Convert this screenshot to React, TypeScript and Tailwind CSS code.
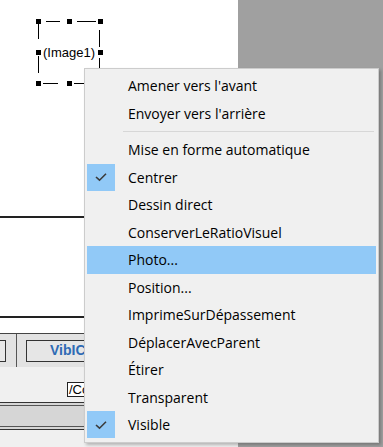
import React from "react";

type Item = { label: string; checked?: boolean; hover?: boolean } | "sep";

const items: Item[] = [
  { label: "Amener vers l'avant" },
  { label: "Envoyer vers l'arrière" },
  "sep",
  { label: "Mise en forme automatique" },
  { label: "Centrer", checked: true },
  { label: "Dessin direct" },
  { label: "ConserverLeRatioVisuel" },
  { label: "Photo...", hover: true },
  { label: "Position..." },
  { label: "ImprimeSurDépassement" },
  { label: "DéplacerAvecParent" },
  { label: "Étirer" },
  { label: "Transparent" },
  { label: "Visible", checked: true },
];

function Check() {
  return (
    <svg width="12" height="10" viewBox="0 0 12 10">
      <path d="M1 5 L4.5 8.2 L11 1.8" fill="none" stroke="#3b3b3b" strokeWidth="1.6" />
    </svg>
  );
}

function Selection() {
  const h = (x: number, y: number) => (
    <rect key={`${x}-${y}`} x={x - 2.5} y={y - 2.5} width="5" height="5" fill="#000" />
  );
  return (
    <svg width="238" height="100" className="block">
      <g stroke="#000" strokeWidth="1">
        <line x1="46" y1="21.5" x2="60" y2="21.5" />
        <line x1="77" y1="21.5" x2="96" y2="21.5" />
        <line x1="43" y1="83.5" x2="58" y2="83.5" />
        <line x1="74" y1="83.5" x2="90" y2="83.5" />
        <line x1="38.5" y1="24" x2="38.5" y2="39" />
        <line x1="38.5" y1="56" x2="38.5" y2="73" />
        <line x1="99.5" y1="30" x2="99.5" y2="47" />
        <line x1="99.5" y1="58" x2="99.5" y2="76" />
      </g>
      {h(38.5, 21.5)}
      {h(69.5, 21.5)}
      {h(100.5, 21.5)}
      {h(38.5, 52.5)}
      {h(100.5, 52.5)}
      {h(38.5, 83.5)}
      {h(69.5, 83.5)}
      <text x="43" y="57" fontSize="13" fontFamily="Liberation Sans, Arial, sans-serif" fill="#000">
        (Image1)
      </text>
    </svg>
  );
}

export default function App() {
  return (
    <div className="relative w-[383px] h-[447px] overflow-hidden bg-[#a0a0a0]">
      <div className="flex h-full">
        <div className="w-[238px] h-full bg-white flex flex-col">
          <div className="h-[216px]">
            <Selection />
          </div>
          <div className="h-[2px] bg-[#222]" />
          <div className="h-[98px]" />
          <div className="h-[2px] bg-[#222]" />
          <div className="h-[15px]" />
          <div className="h-px bg-[#444]" />
          <div className="h-[33px] bg-[#e2e2e2] flex items-center">
            <div className="w-[6px] h-[22px] border border-[#333] border-l-0 bg-[#e8e8e8]" />
            <div className="ml-[10px] w-px h-full bg-[#555]" />
            <div className="ml-[9px] w-[120px] h-[22px] border border-[#333] bg-[#e6e6e6] flex items-center pl-[23px] text-[14px] font-bold text-[#2e6bb5] font-['Liberation_Sans',sans-serif]">
              VibIC
            </div>
          </div>
          <div className="h-[35px] bg-[#f0f0f0] flex items-start">
            <div className="ml-[67px] mt-[15px] h-[15px] w-[60px] border border-[#222] bg-white text-[13px] leading-[13px] pl-px font-['Liberation_Sans',sans-serif] text-black">
              /Co
            </div>
          </div>
          <div className="h-px bg-[#333]" />
          <div className="h-[2px] bg-[#d6d6d6]" />
          <div className="h-px bg-[#555]" />
          <div className="h-[20px] bg-[#d6d6d6]" />
          <div className="h-px bg-[#555]" />
          <div className="h-[2px] bg-[#d6d6d6]" />
          <div className="h-px bg-[#333]" />
          <div className="flex-1 bg-[#f0f0f0]" />
        </div>
        <div className="flex-1" />
      </div>

      <div className="absolute left-[84px] top-[68px] w-[295px] border border-[#cccccc] bg-[#f0f0f0] pt-[3px] pb-[3px] px-[2px] shadow-[2px_2px_3px_rgba(0,0,0,0.25)] font-['Open_Sans',sans-serif] text-[14px] text-black">
        {items.map((it, i) =>
          it === "sep" ? (
            <div key={i} className="h-[9px] flex items-center pl-[36px] pr-[2px]">
              <div className="h-px w-full bg-[#d7d7d7]" />
            </div>
          ) : (
            <div
              key={i}
              className={`h-[27.5px] flex items-center ${it.hover ? "bg-[#91c9f7]" : ""}`}
            >
              <div
                className={`w-[28px] h-[27px] flex items-center justify-center ${
                  it.checked ? "bg-[#91c9f7]" : ""
                }`}
              >
                {it.checked ? <Check /> : null}
              </div>
              <span className="ml-[13px] whitespace-nowrap">{it.label}</span>
            </div>
          )
        )}
      </div>
    </div>
  );
}
